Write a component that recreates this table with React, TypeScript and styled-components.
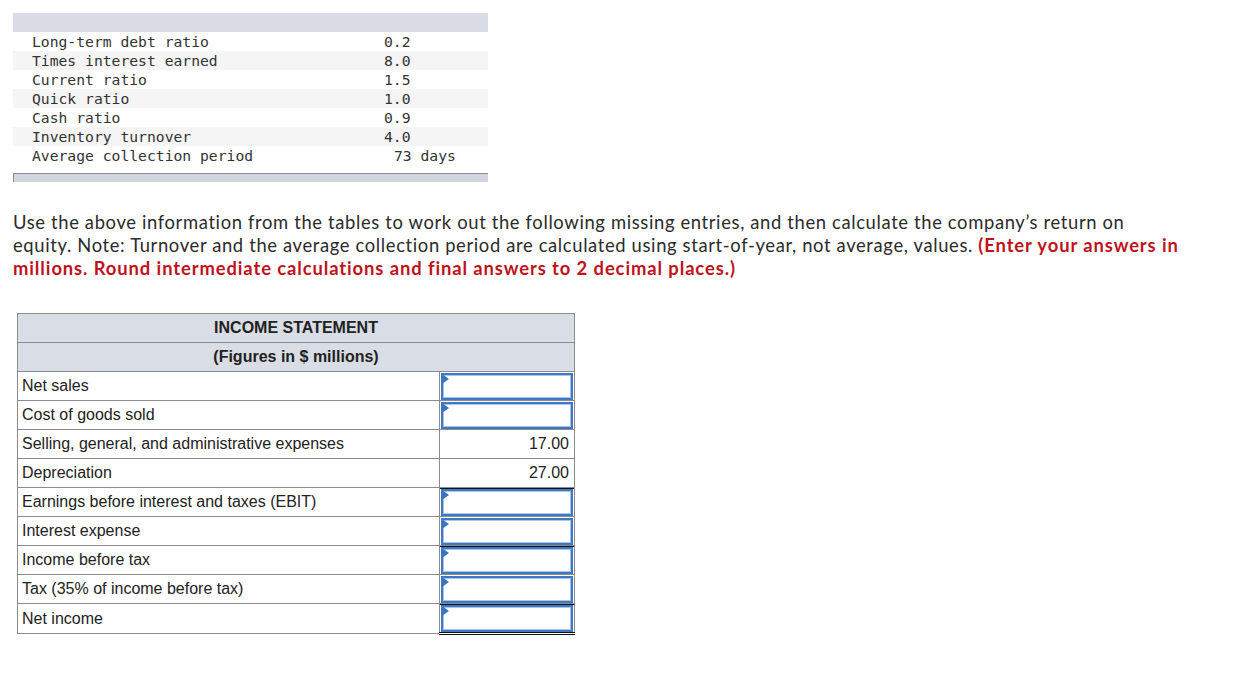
import React from "react";
import styled, { createGlobalStyle } from "styled-components";

const Global = createGlobalStyle`
  html, body { margin: 0; padding: 0; background: #fff; }
  body { font-family: "Liberation Sans", Arial, sans-serif; }
`;

const Page = styled.div`
  padding: 13px 0 0 13px;
  display: flex;
  flex-direction: column;
  align-items: flex-start;
`;

const RatioTable = styled.div`
  width: 475px;
  display: flex;
  flex-direction: column;
`;

const RatioHead = styled.div`
  height: 19px;
  background: #d9dce5;
`;

const RatioRow = styled.div<{ $alt: boolean }>`
  display: grid;
  grid-template-columns: 352px 1fr;
  height: 19px;
  padding-left: 19px;
  background: ${(p) => (p.$alt ? "#f5f5f5" : "#ffffff")};
  font-family: "DejaVu Sans Mono", "Liberation Mono", monospace;
  font-size: 14.7px;
  line-height: 19px;
  color: #333;
  white-space: pre;
`;

const RatioValue = styled.span<{ $shift: number }>`
  padding-left: ${(p) => p.$shift}px;
`;

const RatioFoot = styled.div`
  margin-top: 8px;
  height: 8px;
  background: #d1d5df;
  border-top: 1px solid #8a8a8a;
  border-left: 1px solid #8a8a8a;
`;

const Instructions = styled.p`
  margin: 29px 0 0 0;
  font-family: Lato, "Open Sans", sans-serif;
  font-size: 18.4px;
  line-height: 23px;
  letter-spacing: 0.64px;
  color: #2b2b2b;
  white-space: nowrap;
`;

const Warn = styled.strong`
  color: #c0121b;
  font-weight: 700;
  letter-spacing: 0.9px;
`;

const Statement = styled.table`
  margin: 33px 0 0 4px;
  border-collapse: collapse;
  width: 558px;
  font-family: "Liberation Sans", Arial, sans-serif;
  font-size: 16px;
  color: #222;
`;

const HeadCell = styled.th`
  height: 28px;
  padding: 0;
  background: #d9dde6;
  border: 1px solid #8c8c8c;
  font-weight: 700;
  text-align: center;
  vertical-align: middle;
`;

const LabelCell = styled.td`
  width: 417px;
  height: 28px;
  padding: 0 0 0 4px;
  border: 1px solid #8c8c8c;
  vertical-align: middle;
`;

const ValueCell = styled.td<{ $topLine: boolean; $double: boolean }>`
  height: 28px;
  padding: 0;
  border: 1px solid #8c8c8c;
  ${(p) => (p.$topLine ? "border-top-color: #111; box-shadow: inset 0 1px 0 #111;" : "")}
  ${(p) => (p.$double ? "border-bottom: 3px double #111;" : "")}
  text-align: right;
  vertical-align: middle;
`;

const Number = styled.span`
  display: block;
  padding-right: 5px;
  color: #222;
`;

const InputBox = styled.div`
  position: relative;
  box-sizing: border-box;
  margin: 0 1px;
  height: 27px;
  border: 2px solid #3f79c3;
  box-shadow: inset 0 0 0 1px #a9c6ea;
  background: #fff;
`;

const Flag = styled.span`
  position: absolute;
  z-index: 1;
  left: -1px;
  top: -1px;
  width: 0;
  height: 0;
  border-top: 5px solid transparent;
  border-bottom: 5px solid transparent;
  border-left: 7px solid #3a74c0;
`;

const ratios: [string, string, number][] = [
  ["Long-term debt ratio", "0.2", 0],
  ["Times interest earned", "8.0", 0],
  ["Current ratio", "1.5", 0],
  ["Quick ratio", "1.0", 0],
  ["Cash ratio", "0.9", 0],
  ["Inventory turnover", "4.0", 0],
  ["Average collection period", "73 days", 10],
];

type Line = { label: string; value?: string; top?: boolean; double?: boolean };

const lines: Line[] = [
  { label: "Net sales" },
  { label: "Cost of goods sold" },
  { label: "Selling, general, and administrative expenses", value: "17.00" },
  { label: "Depreciation", value: "27.00" },
  { label: "Earnings before interest and taxes (EBIT)", top: true },
  { label: "Interest expense" },
  { label: "Income before tax", top: true },
  { label: "Tax (35% of income before tax)" },
  { label: "Net income", top: true, double: true },
];

export default function App() {
  return (
    <>
      <Global />
      <Page>
        <RatioTable>
          <RatioHead />
          {ratios.map(([label, value, shift], i) => (
            <RatioRow key={label} $alt={i % 2 === 1}>
              <span>{label}</span>
              <RatioValue $shift={shift}>{value}</RatioValue>
            </RatioRow>
          ))}
          <RatioFoot />
        </RatioTable>

        <Instructions>
          Use the above information from the tables to work out the following missing entries, and then calculate the company’s return on
          <br />
          equity. Note: Turnover and the average collection period are calculated using start-of-year, not average, values.{" "}
          <Warn>(Enter your answers in</Warn>
          <br />
          <Warn>millions. Round intermediate calculations and final answers to 2 decimal places.)</Warn>
        </Instructions>

        <Statement>
          <thead>
            <tr>
              <HeadCell colSpan={2}>INCOME STATEMENT</HeadCell>
            </tr>
            <tr>
              <HeadCell colSpan={2}>(Figures in $ millions)</HeadCell>
            </tr>
          </thead>
          <tbody>
            {lines.map((l) => (
              <tr key={l.label}>
                <LabelCell>{l.label}</LabelCell>
                <ValueCell $topLine={!!l.top} $double={!!l.double}>
                  {l.value ? (
                    <Number>{l.value}</Number>
                  ) : (
                    <InputBox>
                      <Flag />
                    </InputBox>
                  )}
                </ValueCell>
              </tr>
            ))}
          </tbody>
        </Statement>
      </Page>
    </>
  );
}
